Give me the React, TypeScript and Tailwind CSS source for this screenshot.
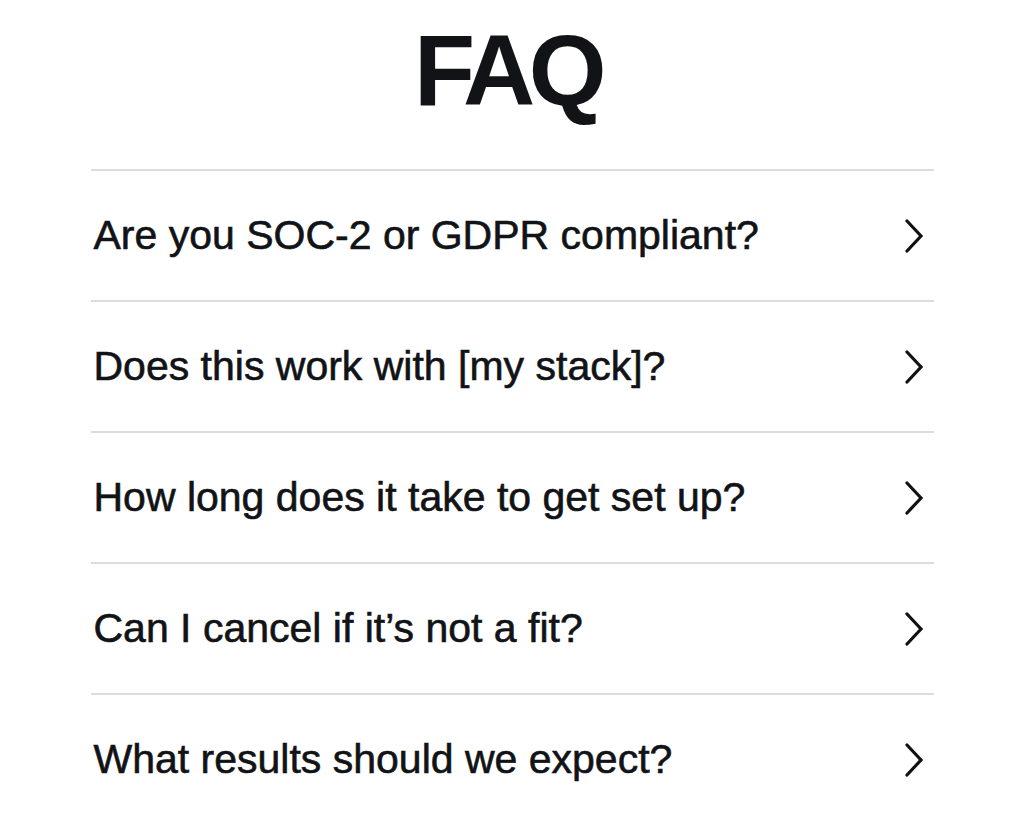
import React from 'react';

const questions = [
  'Are you SOC-2 or GDPR compliant?',
  'Does this work with [my stack]?',
  'How long does it take to get set up?',
  'Can I cancel if it’s not a fit?',
  'What results should we expect?',
];

const Chevron = () => (
  <svg width="20" height="34" viewBox="0 0 20 34" fill="none" className="shrink-0">
    <polyline
      points="3,2 17,17 3,32"
      stroke="#111"
      strokeWidth="3.2"
      strokeLinecap="round"
      strokeLinejoin="miter"
    />
  </svg>
);

export default function App() {
  return (
    <div
      className="min-h-screen bg-white text-[#111316]"
      style={{ fontFamily: '"Liberation Sans", Arial, sans-serif' }}
    >
      <div className="mx-auto w-[843px]">
        {/* Title */}
        <div className="h-[169px] flex justify-center pt-[20px]">
          <h1 className="text-[100px] leading-none font-bold tracking-[-0.065em] pr-[10px]">FAQ</h1>
        </div>

        {/* Questions */}
        <ul>
          {questions.map((q) => (
            <li
              key={q}
              className="h-[131px] border-t-2 border-[#dcdcdc] flex items-center justify-between pl-[3px] pr-[10px]"
            >
              <span className="text-[41px] leading-none [-webkit-text-stroke:0.6px_#111316]">{q}</span>
              <Chevron />
            </li>
          ))}
        </ul>
      </div>
    </div>
  );
}
